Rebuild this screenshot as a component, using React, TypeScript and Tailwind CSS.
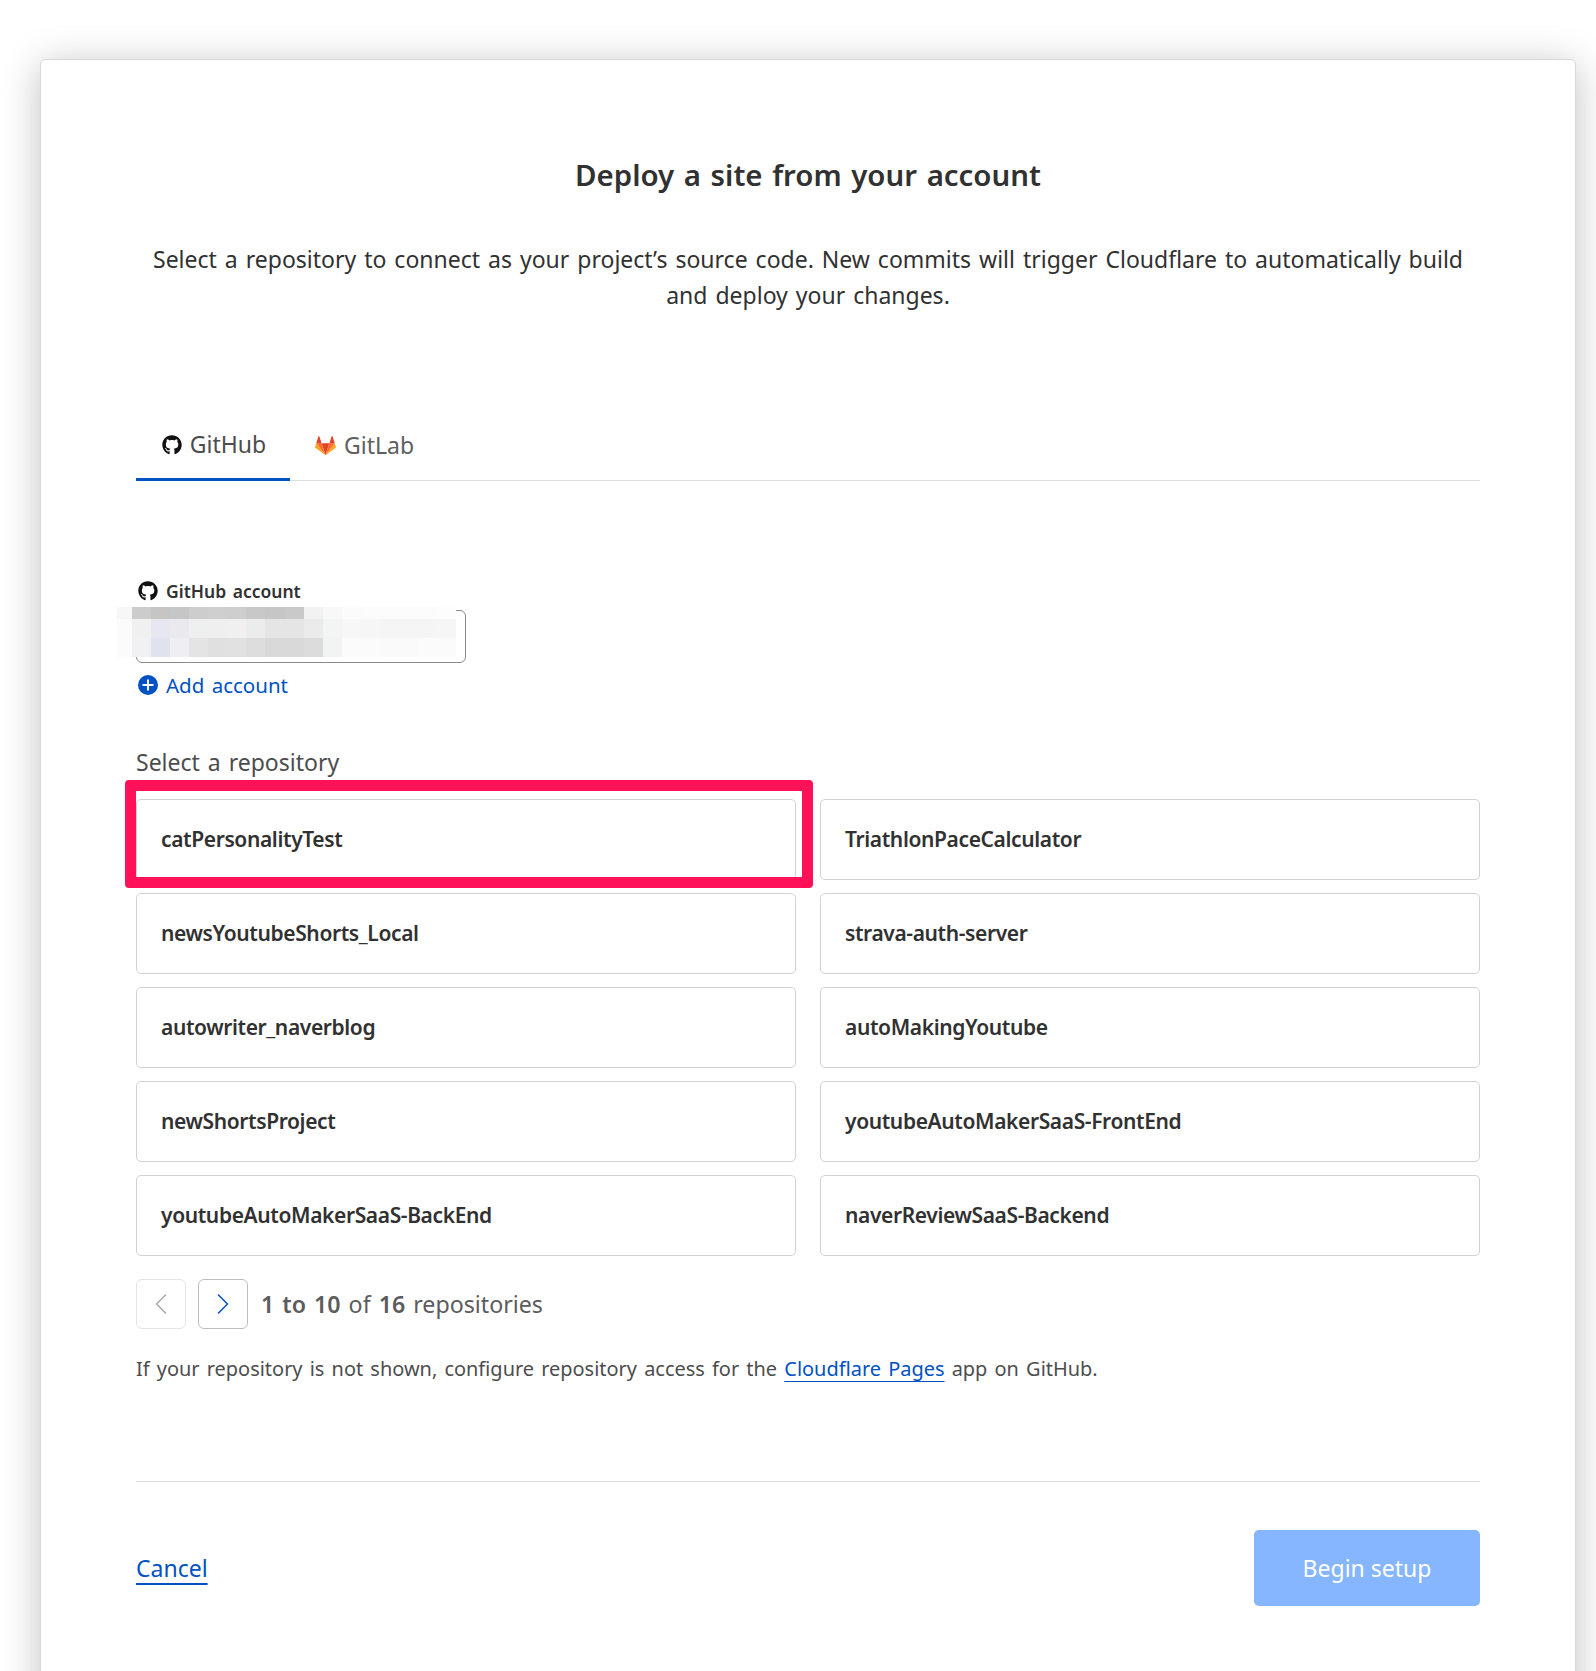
import React from "react";
import { FaGithub } from "react-icons/fa";
import { ChevronLeft, ChevronRight } from "lucide-react";

const repos = [
  "catPersonalityTest",
  "TriathlonPaceCalculator",
  "newsYoutubeShorts_Local",
  "strava-auth-server",
  "autowriter_naverblog",
  "autoMakingYoutube",
  "newShortsProject",
  "youtubeAutoMakerSaaS-FrontEnd",
  "youtubeAutoMakerSaaS-BackEnd",
  "naverReviewSaaS-Backend",
];

// mosaic that hides the account name
const mosaic = [
  ["#f7f7f7", "#cccccc", "#c6c5c3", "#c5c6c5", "#cdcdcd", "#cfcfcf", "#cecece", "#c8c8c8", "#c6c6c6", "#c9c9c9", "#f2f2f2", "#f8f8f8", "#fbfbfb", "#fcfcfc", "#fcfcfc", "#fcfcfc", "#fcfcfc", "#fdfdfd"],
  ["#fbfbfb", "#f0f0f0", "#e6e7f0", "#eaeaee", "#eeefef", "#eeefee", "#eff0ef", "#ebecec", "#e5e5e5", "#e5e5e5", "#ebebeb", "#f3f5f4", "#f7f7f7", "#f6f6f6", "#f5f5f5", "#f5f5f5", "#f5f5f5", "#f6f6f6"],
  ["#fbfbfb", "#f1f1f4", "#e0e2ee", "#eeeef3", "#e4e4e4", "#dfe0df", "#e0e1e0", "#dcdddc", "#d9d9d9", "#d9d9d9", "#dcdcdc", "#f2f4f3", "#fbfbfb", "#fbfbfb", "#fafafa", "#fafafa", "#fbfbfb", "#fbfbfb"],
];

const GitLabLogo = () => (
  <svg viewBox="0 0 24 22" className="h-[21px] w-[21px]">
    <path d="M12 22 16.4 8.4H7.6Z" fill="#e24329" />
    <path d="M12 22 7.6 8.4H1.4Z" fill="#fc6d26" />
    <path d="M1.4 8.4.1 12.6c-.1.4 0 .8.3 1L12 22Z" fill="#fca326" />
    <path d="M1.4 8.4H7.6L4.9.5c-.1-.4-.7-.4-.9 0Z" fill="#e24329" />
    <path d="M12 22l4.4-13.6h6.2Z" fill="#fc6d26" />
    <path d="M22.6 8.4l1.3 4.2c.1.4 0 .8-.3 1L12 22Z" fill="#fca326" />
    <path d="M22.6 8.4H16.4L19.1.5c.1-.4.7-.4.9 0Z" fill="#e24329" />
  </svg>
);

const RepoCard = ({ name }: { name: string }) => (
  <div className="flex h-[81px] items-center rounded-[5px] border border-[#d2d2d2] bg-white pl-[24px] text-[21px] font-semibold tracking-[-0.38px] text-[#313131]">
    {name}
  </div>
);

export default function App() {
  return (
    <div className="h-[1671px] overflow-hidden bg-white pt-[59px] pl-[40px] pr-[20px] font-['Noto_Sans',sans-serif] [word-spacing:2px]">
      <div className="h-[1700px] rounded-[5px] border border-[#d9d9d9] bg-white px-[95px] pt-[95px] shadow-[0_6px_38px_rgba(0,0,0,0.25)]">
        <h1 className="text-center text-[29.4px] leading-[40px] font-semibold text-[#313131]">
          Deploy a site from your account
        </h1>
        <p className="mx-auto mt-[46px] text-center text-[23px] leading-[36px] text-[#313131]">
          Select a repository to connect as your project’s source code. New commits will trigger Cloudflare to
          automatically build
          <br />
          and deploy your changes.
        </p>

        <div className="mt-[95px] flex h-[73px] border-b border-[#dedede]">
          <div className="flex h-[73px] w-[154px] items-center justify-center gap-[8px] border-b-[3px] border-[#0051c3] pt-[3px] pl-[2px] text-[23px] text-[#4d4d4d]">
            <FaGithub className="h-[20px] w-[20px] text-[#111111]" />
            GitHub
          </div>
          <div className="ml-[25px] flex h-[72px] items-center gap-[8px] pt-[2px] text-[23px] text-[#5f5f5f]">
            <GitLabLogo />
            GitLab
          </div>
        </div>

        <div className="mt-[98px] flex h-[24px] items-center gap-[8px] text-[17.5px] font-semibold text-[#313131]">
          <FaGithub className="ml-[2px] h-[20px] w-[20px] text-[#111111]" />
          GitHub account
        </div>
        <div className="relative mt-[7px] h-[53px] w-[330px] rounded-[6px] border border-[#8a8a8a] bg-white">
          <div className="absolute top-[-4px] left-[-20px] flex h-[50px] w-[339px] flex-col">
            {mosaic.map((row, i) => (
              <div key={i} className={`flex ${i === 0 ? "h-[12px]" : "h-[19px]"}`}>
                {row.map((c, j) => (
                  <div
                    key={j}
                    className={j === 0 ? "h-full w-[15px]" : "h-full flex-1"}
                    style={{ backgroundColor: c }}
                  />
                ))}
              </div>
            ))}
          </div>
        </div>
        <div className="mt-[9px] flex h-[26px] items-center gap-[8px] text-[20.5px] text-[#0051c3]">
          <svg viewBox="0 0 20 20" className="ml-[2px] h-[20px] w-[20px]">
            <circle cx="10" cy="10" r="10" fill="#0051c3" />
            <path d="M10 4.5v11M4.5 10h11" stroke="#fff" strokeWidth="2" />
          </svg>
          Add account
        </div>

        <div className="mt-[47px] h-[34px] text-[23px] leading-[34px] text-[#4d4d4d]">Select a repository</div>

        <div className="relative mt-[20px] grid grid-cols-2 gap-x-[24px] gap-y-[13px]">
          {repos.map((r) => (
            <RepoCard key={r} name={r} />
          ))}
          <div className="absolute top-[-19px] left-[-11px] h-[108px] w-[688px] rounded-[4px] border-[11px] border-[#ff1158]" />
        </div>

        <div className="mt-[23px] flex h-[50px] items-center">
          <button className="flex h-[50px] w-[50px] items-center justify-center rounded-[6px] border border-[#e4e4e4] bg-white">
            <ChevronLeft className="h-[36px] w-[36px] text-[#a8a8a8]" strokeWidth={1} />
          </button>
          <button className="ml-[12px] flex h-[50px] w-[50px] items-center justify-center rounded-[6px] border border-[#bdbdbd] bg-white">
            <ChevronRight className="h-[36px] w-[36px] text-[#0051c3]" strokeWidth={1} />
          </button>
          <div className="ml-[13px] pt-[1px] text-[23.2px] text-[#5c5c5c]">
            <span className="font-semibold">1 to 10</span> of <span className="font-semibold">16</span> repositories
          </div>
        </div>

        <p className="mt-[22px] text-[19.95px] leading-[36px] text-[#4d4d4d]">
          If your repository is not shown, configure repository access for the{" "}
          <a className="text-[#0051c3] underline underline-offset-[5px]">Cloudflare Pages</a> app on GitHub.
        </p>

        <div className="mt-[94px] border-t border-[#dedede]" />

        <div className="mt-[48px] flex items-center justify-between">
          <a className="pt-[1px] text-[23px] text-[#0051c3] underline underline-offset-[6px]">Cancel</a>
          <button className="h-[76px] w-[226px] rounded-[5px] bg-[#85b6ff] text-[23px] text-white">Begin setup</button>
        </div>
      </div>
    </div>
  );
}
